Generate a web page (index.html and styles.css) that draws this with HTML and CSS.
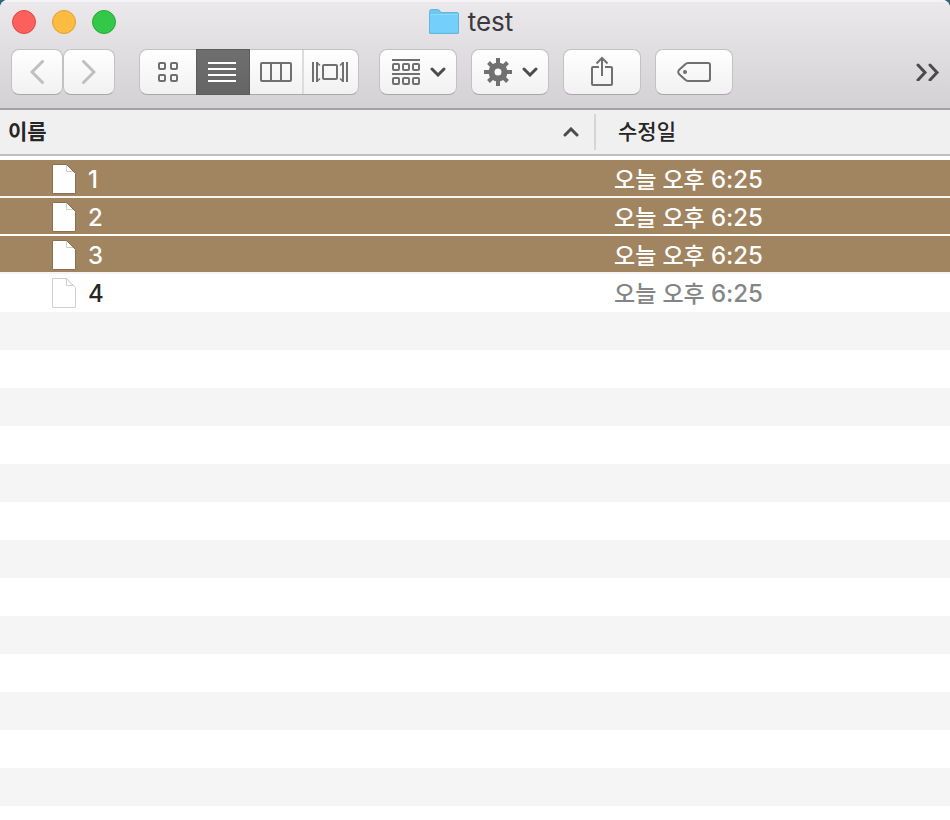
FILE: index.html
```html
<!DOCTYPE html>
<html lang="ko">

<head>
    <meta charset="UTF-8">
    <title>test</title>
    <link rel="stylesheet" href="styles.css">
</head>

<body>

    <div class="window">
        <header class="titlebar">
            <div class="title-row">
                <div class="lights">
                    <button class="light light-close" aria-label="닫기"></button>
                    <button class="light light-min" aria-label="최소화"></button>
                    <button class="light light-zoom" aria-label="확대"></button>
                </div>
                <h1 class="title">
                    <svg width="30" height="26" viewBox="0 0 30 26">
                        <path d="M0.5 24V2.5Q0.5 0.5 2.5 0.5H8.5Q10 0.5 11 2L12 3.5H28Q29.5 3.5 29.5 5V24Q29.5 24.5 29 24.5H1Q0.5 24.5 0.5 24Z" fill="#6bc7ef" stroke="#62b7de" />
                        <path d="M1 5H29V23.5H1Z" fill="#74d0fa" stroke="none" />
                        <path d="M1 5.5H29" stroke="#8bdafc" />
                    </svg>
                    test
                </h1>
            </div>

            <div class="toolbar">
                <div class="nav-group">
                    <button class="btn btn-nav" aria-label="뒤로">
                        <svg width="14" height="24" viewBox="0 0 14 24"><path d="M12.5 1.5L2 12L12.5 22.5" /></svg>
                    </button>
                    <button class="btn btn-nav" aria-label="앞으로">
                        <svg width="14" height="24" viewBox="0 0 14 24"><path d="M1.5 1.5L12 12L1.5 22.5" /></svg>
                    </button>
                </div>

                <div class="view-group">
                    <button class="view" aria-label="아이콘 보기">
                        <svg width="20" height="20" viewBox="0 0 20 20">
                            <rect x="1" y="1" width="6" height="6" rx="1" />
                            <rect x="13" y="1" width="6" height="6" rx="1" />
                            <rect x="1" y="13" width="6" height="6" rx="1" />
                            <rect x="13" y="13" width="6" height="6" rx="1" />
                        </svg>
                    </button>
                    <button class="view view-active" aria-label="목록 보기" aria-pressed="true">
                        <svg width="28" height="20" viewBox="0 0 28 20"><path d="M0 1H28M0 7H28M0 13H28M0 19H28" /></svg>
                    </button>
                    <button class="view" aria-label="계층 보기">
                        <svg width="32" height="20" viewBox="0 0 32 20">
                            <rect x="1" y="1" width="30" height="18" rx="1" />
                            <path d="M11 1V19M21 1V19" />
                        </svg>
                    </button>
                    <button class="view view-last" aria-label="커버 플로">
                        <svg width="36" height="20" viewBox="0 0 36 20">
                            <path d="M1 0V20M35 0V20M5 0V20M31 0V20" />
                            <path d="M5.5 1L8 3.5M5.5 19L8 16.5M30.5 1L28 3.5M30.5 19L28 16.5" stroke-width="1.5" />
                            <rect x="11" y="3" width="14" height="14" rx="1" />
                        </svg>
                    </button>
                </div>

                <div class="action-group">
                    <button class="btn btn-menu" aria-label="정렬">
                        <svg width="28" height="26" viewBox="0 0 28 26">
                            <path d="M0 1H28M0 15H28" />
                            <rect x="1" y="5" width="6" height="6" rx="1" />
                            <rect x="11" y="5" width="6" height="6" rx="1" />
                            <rect x="21" y="5" width="6" height="6" rx="1" />
                            <rect x="1" y="19" width="6" height="6" rx="1" />
                            <rect x="11" y="19" width="6" height="6" rx="1" />
                            <rect x="21" y="19" width="6" height="6" rx="1" />
                        </svg>
                        <svg class="chevron" width="16" height="10" viewBox="0 0 16 10"><path d="M2 2L8 8L14 2" /></svg>
                    </button>
                    <button class="btn btn-menu" aria-label="동작">
                        <svg width="28" height="28" viewBox="-14 -14 28 28">
                            <circle r="6.500" stroke-width="6" />
                            <path d="M0 -14V-8M0 14V8M-14 0H-8M14 0H8M-9.500 -9.500L-6 -6M9.500 -9.500L6 -6M-9.500 9.500L-6 6M9.500 9.500L6 6" stroke-width="4" />
                        </svg>
                        <svg class="chevron" width="16" height="10" viewBox="0 0 16 10"><path d="M2 2L8 8L14 2" /></svg>
                    </button>
                    <button class="btn" aria-label="공유">
                        <svg width="22" height="32" viewBox="0 0 22 32">
                            <path d="M8 11H2Q1 11 1 12V28Q1 29 2 29H20Q21 29 21 28V12Q21 11 20 11H14" />
                            <path d="M11 20V2M5.5 7.5L11 2L16.5 7.5" />
                        </svg>
                    </button>
                    <button class="btn" aria-label="태그">
                        <svg width="34" height="20" viewBox="0 0 34 20">
                            <path d="M11 1H31Q33 1 33 3V17Q33 19 31 19H11Q9.500 19 8 17.500L2 12Q0.500 10 2 8L8 2.500Q9.500 1 11 1Z" />
                            <circle cx="8" cy="10" r="2" fill="#707070" stroke="none" />
                        </svg>
                    </button>
                </div>

                <button class="overflow" aria-label="더 보기">
                    <svg width="24" height="18" viewBox="0 0 24 18"><path d="M2 2L9 9.500L2 17M14 2L21 9.500L14 17" /></svg>
                </button>
            </div>
        </header>

        <table class="files">
            <thead>
                <tr>
                    <th class="col-name" aria-sort="ascending">
                        <div class="head-cell">
                            이름
                            <svg class="chevron" width="16" height="10" viewBox="0 0 16 10"><path d="M2 8L8 2L14 8" /></svg>
                        </div>
                    </th>
                    <th class="col-date">수정일</th>
                </tr>
            </thead>
            <tbody>
                <tr class="selected">
                    <td>
                        <div class="file">
                            <svg width="24" height="32" viewBox="0 1 24 32"><path class="page" d="M0.500 1.500H14.500L23.500 10.500V30.500H0.500Z" /><path class="fold" d="M14.500 2V8.500H21" /></svg>
                            1
                        </div>
                    </td>
                    <td class="date">오늘 오후 <span class="time">6:25</span></td>
                </tr>
                <tr class="selected">
                    <td>
                        <div class="file">
                            <svg width="24" height="32" viewBox="0 1 24 32"><path class="page" d="M0.500 1.500H14.500L23.500 10.500V30.500H0.500Z" /><path class="fold" d="M14.500 2V8.500H21" /></svg>
                            2
                        </div>
                    </td>
                    <td class="date">오늘 오후 <span class="time">6:25</span></td>
                </tr>
                <tr class="selected">
                    <td>
                        <div class="file">
                            <svg width="24" height="32" viewBox="0 1 24 32"><path class="page" d="M0.500 1.500H14.500L23.500 10.500V30.500H0.500Z" /><path class="fold" d="M14.500 2V8.500H21" /></svg>
                            3
                        </div>
                    </td>
                    <td class="date">오늘 오후 <span class="time">6:25</span></td>
                </tr>
                <tr>
                    <td>
                        <div class="file">
                            <svg width="24" height="32" viewBox="0 1 24 32"><path class="page" d="M0.500 1.500H14.500L23.500 10.500V30.500H0.500Z" /><path class="fold" d="M14.500 1.500V8.500H21L14.500 1.500" /></svg>
                            4
                        </div>
                    </td>
                    <td class="date">오늘 오후 <span class="time">6:25</span></td>
                </tr>
            </tbody>
        </table>
        <div class="empty-rows"></div>
    </div>

</body>

</html>
```

FILE: styles.css
```css
* {
    margin: 0;
    padding: 0;
    box-sizing: border-box;
}

body {
    font-family: Inter, "Noto Sans CJK KR", sans-serif;
    background: #2f6a7c;
    color: #262626;
}

button {
    border: none;
    background: none;
    font: inherit;
}

svg {
    display: block;
    flex: none;
    fill: none;
    stroke: #707070;
    stroke-width: 2;
}

.window {
    display: flex;
    flex-direction: column;
    min-height: 100vh;
    background: #fff;
    border-radius: 8px 8px 0 0;
    overflow: hidden;
}

/* title bar */

.titlebar {
    background: linear-gradient(#ebe9eb, #d3d1d3);
    border-bottom: 2px solid #a3a2a3;
    box-shadow: inset 0 2px 0 #f5f4f5;
    padding-bottom: 13px;
}

.title-row {
    display: grid;
    grid-template-columns: 1fr auto 1fr;
    align-items: center;
    height: 44px;
    padding: 0 20px 0 12px;
}

.lights {
    display: flex;
    gap: 16px;
}

.light {
    width: 24px;
    height: 24px;
    border-radius: 50%;
    border: 1px solid;
}

.light-close {
    background: #fc605c;
    border-color: #df4744;
}

.light-min {
    background: #fdbc40;
    border-color: #de9f34;
}

.light-zoom {
    background: #34c84a;
    border-color: #27a934;
}

.title {
    display: flex;
    align-items: center;
    gap: 9px;
    font-size: 26px;
    line-height: 30px;
    font-weight: 400;
    color: #3c3a3c;
}

.title svg {
    stroke-width: 1;
}

/* toolbar */

.toolbar {
    display: flex;
    align-items: center;
    padding: 5px 10px 0 11px;
}

.nav-group {
    display: flex;
    margin-right: 24px;
}

.btn,
.view-group {
    height: 46px;
    border: 1px solid #c3c1c3;
    border-bottom-color: #aaa8aa;
    border-radius: 8px;
    background: linear-gradient(#fff, #f1f1f1);
}

.btn {
    display: flex;
    align-items: center;
    justify-content: center;
    width: 78px;
}

.btn-nav {
    width: 52px;
}

.btn-nav svg {
    stroke: #bfbfbf;
    stroke-width: 3;
    stroke-linecap: round;
}

.view-group {
    display: flex;
    margin-right: 20px;
}

.view {
    display: flex;
    align-items: center;
    justify-content: center;
    width: 52px;
}

.view:first-child {
    width: 56px;
}

.view-active {
    width: 54px;
    margin: -1px 0;
    padding-right: 2px;
    background: linear-gradient(#6f6f6f, #656565);
    border: 1px solid #5c5c5c;
}

.view-active svg {
    stroke: #fff;
}

.view-last {
    width: 56px;
    padding-right: 2px;
    border-left: 2px solid #dcdcdc;
}

.action-group {
    display: flex;
    gap: 14px;
}

.btn-menu {
    gap: 10px;
    padding-left: 2px;
}

.chevron {
    stroke: #4c4c4c;
    stroke-width: 3;
    stroke-linecap: round;
}

.overflow {
    margin-left: auto;
}

.overflow svg {
    stroke: #4c4a4c;
    stroke-width: 3;
    stroke-linecap: round;
}

/* file list */

.files {
    width: 100%;
    table-layout: fixed;
    border-collapse: separate;
    border-spacing: 0;
}

th {
    height: 46px;
    background: #f0f0f0;
    border-bottom: 2px solid #bfbfbf;
    text-align: left;
    font-size: 21px;
    line-height: 30px;
}

.col-name {
    width: 596px;
    padding-left: 8px;
    font-weight: 700;
}

.head-cell {
    display: flex;
    align-items: center;
    justify-content: space-between;
    height: 36px;
    padding-right: 15px;
    border-right: 2px solid #d5d5d5;
}

.col-date {
    padding-left: 22px;
    font-weight: 500;
}

tbody::before {
    content: "";
    display: block;
    height: 4px;
}

td {
    height: 38px;
    padding-top: 4px;
    font-size: 24px;
    line-height: 32px;
    font-weight: 500;
    border-bottom: 2px solid #fff;
}

tbody tr:nth-child(odd) td {
    border-color: #f5f5f5;
}

.file {
    display: flex;
    align-items: center;
    gap: 12px;
    height: 32px;
    padding-left: 52px;
}

.page {
    fill: #fff;
    stroke: #cfcfcf;
    stroke-width: 1;
}

.fold {
    stroke: #cfcfcf;
    stroke-width: 1;
}

.date {
    padding-left: 18px;
    font-size: 23px;
    color: #858585;
}

.time {
    font-size: 24px;
}

.selected td {
    background: #a18460;
    background-clip: padding-box;
    color: #fff;
}

.selected .page {
    stroke: #8c7150;
}

.empty-rows {
    flex: 1;
    background: repeating-linear-gradient(#f5f5f5 0 38px, #fff 38px 76px);
}
```
